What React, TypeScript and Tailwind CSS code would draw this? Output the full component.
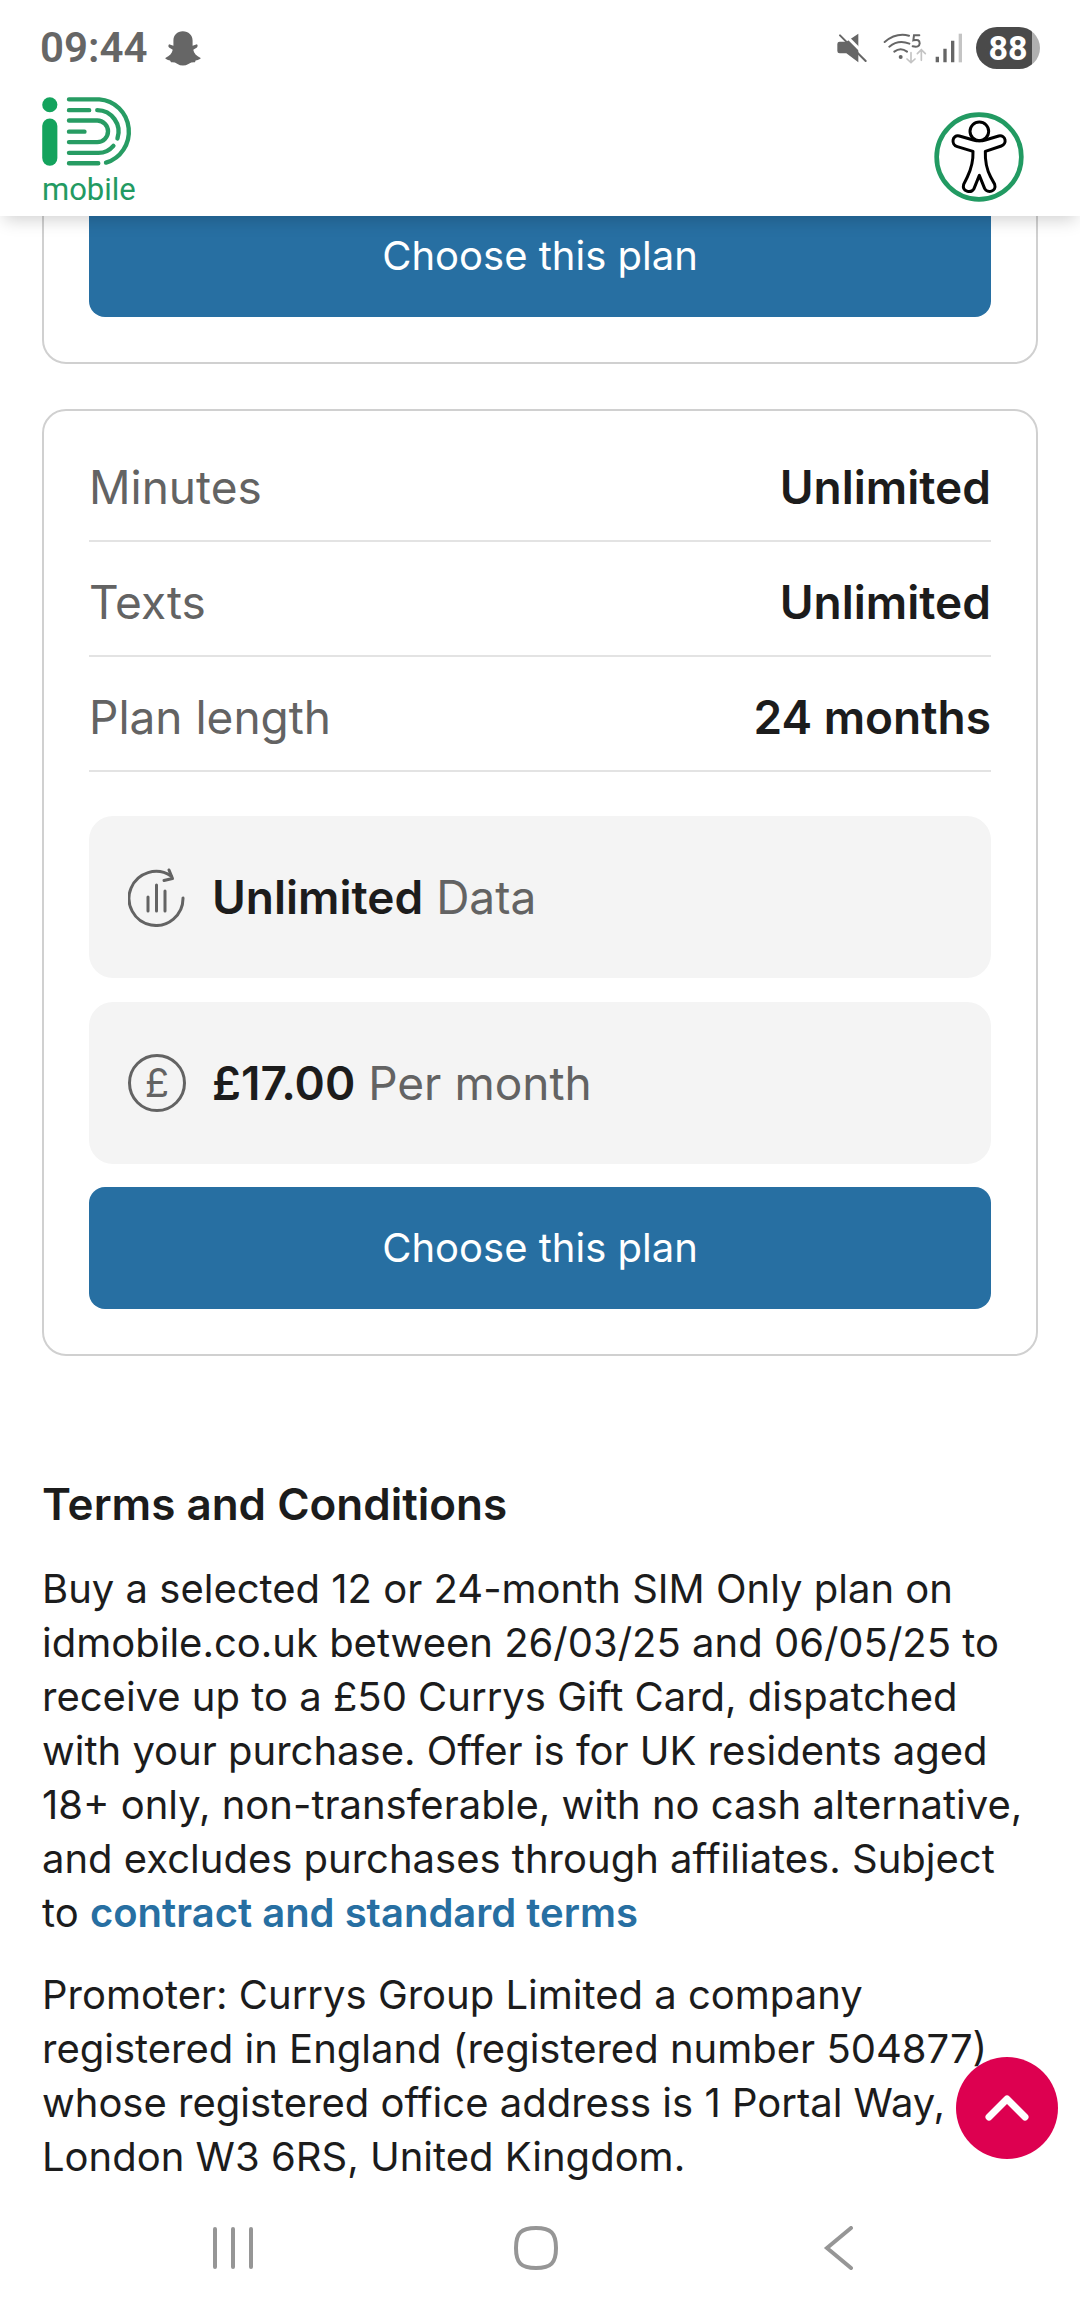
import React from 'react';

function SnapIcon() {
  return (
    <svg viewBox="497 95 107 104" className="h-[35px] w-9" fill="#666" aria-hidden="true">
      <path d="M550 96C533 96 522 108 522 123V139L509 134Q505 140 509 144L520 151C518 161 511 170 498 175Q497 179 512 183L515 188Q526 187 533 192Q550 203 568 192Q576 187 586 188L588 183Q604 179 603 175C590 170 583 161 581 151L592 144Q596 139 592 134L579 139V123C579 108 567 96 550 96Z" />
    </svg>
  );
}

function MuteIcon() {
  return (
    <svg viewBox="110 102 90 90" className="size-[30px]" aria-hidden="true">
      <path d="M118 128H138L174 104V190L138 163H118Q111 163 111 156V135Q111 128 118 128Z" fill="#666" />
      <path d="M124 97L204 178" stroke="#fff" strokeWidth="9" />
      <path d="M119 109L196 186" stroke="#666" strokeWidth="6" strokeLinecap="round" />
    </svg>
  );
}

function WifiIcon() {
  return (
    <svg viewBox="246 99 132 96" className="h-8 w-11" fill="none" strokeLinecap="round" aria-hidden="true">
      <path d="M251 129Q285 100 324 110M265 143Q292 121 325 134M280 158Q299 144 318 158" stroke="#666" strokeWidth="6" />
      <circle cx="299" cy="174" r="6" fill="#666" />
      <path d="M355 109H339L337 124Q356 119 356 133Q355 147 335 142" stroke="#666" strokeWidth="6" />
      <path d="M330 161V190M318 180L330 191L342 180M361 184V153M349 164L361 152L373 164" stroke="#c4c4c4" strokeWidth="5" />
    </svg>
  );
}

function SignalIcon() {
  return (
    <svg viewBox="404 100 84 90" className="h-[30px] w-7" strokeWidth="10" aria-hidden="true">
      <path d="M411 171V188M434 147V188M457 123V188" stroke="#666" />
      <path d="M480 102V188" stroke="#c4c4c4" />
    </svg>
  );
}

function Logo() {
  return (
    <a href="#home" aria-label="iD mobile" className="flex flex-col pt-px text-[#229a62]">
      <svg viewBox="126 293 273 205" className="h-[69px] w-[92px]" aria-hidden="true">
        <circle cx="149" cy="316" r="22.5" fill="#14a35d" />
        <rect x="126.500" y="357" width="45" height="140" rx="22.500" fill="#14a35d" />
        <path
          d="M206 300H296A94 96 0 0 1 316 488M206 332H266M290 332A64 64 0 0 1 350 416M206 363H290A32 32 0 0 1 290 427H206M206 396H252M206 459H294Q320 459 338 438M206 490H293"
          fill="none"
          stroke="#279c63"
          strokeWidth="13"
          strokeLinecap="round"
        />
      </svg>
      <span className="pt-1 font-[Roboto,sans-serif] text-[31px] leading-[40px]">mobile</span>
    </a>
  );
}

function AccessibilityIcon() {
  return (
    <svg viewBox="402 336 270 270" className="size-[90px]" fill="none" aria-hidden="true">
      <circle cx="537" cy="471" r="127" stroke="#229a62" strokeWidth="14" />
      <g stroke="#000" strokeWidth="9" strokeLinejoin="round">
        <circle cx="538" cy="394" r="28" />
        <path d="M478 408L520 420Q538 425 556 420L596 408C618 404 622 432 604 438L556 454C555 480 561 510 572 531L584 553C591 575 562 581 554 566L538 526L522 566C513 581 485 575 491 553L502 531C514 506 520 482 519 454L472 440C452 434 456 403 478 408Z" />
      </g>
    </svg>
  );
}

function DataIcon() {
  return (
    <svg viewBox="0 0 58 60" className="h-[60px] w-[58px] shrink-0" fill="none" stroke="#636363" strokeWidth="3" strokeLinecap="round" strokeLinejoin="round" aria-hidden="true">
      <path d="M55 31A27 27 0 1 1 43 9" />
      <path d="M41 3L44.500 11.500L36 13.500" />
      <path d="M20 30V44M28.500 18V44M37 24V44" />
    </svg>
  );
}

function PoundIcon() {
  return (
    <span className="flex size-[58px] shrink-0 items-center justify-center rounded-full border-3 border-[#636363] text-[40px] leading-none text-[#636363]" aria-hidden="true">
      £
    </span>
  );
}

function ChooseButton() {
  return (
    <button type="button" className="h-[122px] w-full rounded-2xl bg-[#276fa2] text-[40px] leading-[54px] text-white">
      Choose this plan
    </button>
  );
}

const rows = [
  ['Minutes', 'Unlimited'],
  ['Texts', 'Unlimited'],
  ['Plan length', '24 months'],
];

function Feature({ icon, value, label }: { icon: React.ReactNode; value: string; label: string }) {
  return (
    <div className="flex h-[162px] items-center gap-[26px] rounded-3xl bg-[#f4f4f4] px-[39px] text-[46px] leading-[60px]">
      {icon}
      <p>
        <strong className="font-semibold text-[#1c1c1c]">{value}</strong> {label}
      </p>
    </div>
  );
}

export default function App() {
  return (
    <div className="flex min-h-screen flex-col bg-white font-[Inter,sans-serif] text-[#1c1c1c]">
      <header className="relative z-10 bg-white shadow-[0_8px_16px_-4px_rgba(0,0,0,0.18)]">
        <div className="flex h-24 items-center justify-between px-10 font-[Roboto,sans-serif] text-[#666]">
          <div className="flex items-center gap-[18px]">
            <span className="text-[42px] leading-[48px] font-semibold">09:44</span>
            <SnapIcon />
          </div>
          <div className="flex items-center">
            <MuteIcon />
            <span className="ml-4 flex"><WifiIcon /></span>
            <span className="ml-2 flex"><SignalIcon /></span>
            <span className="ml-[13px] flex h-[42px] w-16 items-center justify-center rounded-full bg-linear-to-r from-[#4a4a4a] from-87% to-[#b0b0b0] to-87% text-[34px] leading-none font-bold text-white">
              88
            </span>
          </div>
        </div>
        <div className="flex h-[120px] items-start justify-between pr-14 pl-[42px]">
          <Logo />
          <button type="button" aria-label="Accessibility options" className="mt-4 rounded-full">
            <AccessibilityIcon />
          </button>
        </div>
      </header>

      <main className="px-[42px]">
        <section className="-mt-17 rounded-3xl border-2 border-[#d0d0d0] p-[45px]">
          <ChooseButton />
        </section>

        <section className="mt-[45px] rounded-3xl border-2 border-[#d0d0d0] px-[45px] pt-4 pb-[45px] text-[#636363]">
          <dl>
            {rows.map(([label, value]) => (
              <div key={label} className="flex justify-between border-b-2 border-[#e3e3e3] pt-[30px] pb-[23px] text-[46px] leading-[60px]">
                <dt>{label}</dt>
                <dd className="font-semibold text-[#1c1c1c]">{value}</dd>
              </div>
            ))}
          </dl>
          <div className="mt-11 mb-[23px] flex flex-col gap-6">
            <Feature icon={<DataIcon />} value="Unlimited" label="Data" />
            <Feature icon={<PoundIcon />} value="£17.00" label="Per month" />
          </div>
          <ChooseButton />
        </section>

        <section className="mt-[118px] text-[40px] leading-[54px]">
          <h2 className="text-[44px] leading-[60px] font-semibold">Terms and Conditions</h2>
          <p className="mt-7">
            Buy a selected 12 or 24-month SIM Only plan on<br />
            idmobile.co.uk between 26/03/25 and 06/05/25 to<br />
            receive up to a £50 Currys Gift Card, dispatched<br />
            with your purchase. Offer is for UK residents aged<br />
            18+ only, non-transferable, with no cash alternative,<br />
            and excludes purchases through affiliates. Subject<br />
            to <a href="#terms" className="font-semibold text-[#276fa2]">contract and standard terms</a>
          </p>
          <p className="mt-7">
            Promoter: Currys Group Limited a company<br />
            registered in England (registered number 504877)<br />
            whose registered office address is 1 Portal Way,<br />
            London W3 6RS, United Kingdom.
          </p>
        </section>
      </main>

      <button type="button" aria-label="Back to top" className="fixed right-[22px] bottom-[157px] z-20 flex size-[102px] items-center justify-center rounded-full bg-[#dd0050]">
        <svg viewBox="0 0 44 28" className="h-7 w-11" fill="none" stroke="#fff" strokeWidth="7" strokeLinecap="round" strokeLinejoin="round" aria-hidden="true">
          <path d="M4 23L22 5L40 23" />
        </svg>
      </button>

      <nav aria-label="System navigation" className="mt-auto flex h-[132px] items-center justify-around pr-[90px] pl-[82px] pb-1 text-[#969696]">
        <button type="button" aria-label="Recent apps">
          <svg viewBox="0 0 44 44" className="size-11" stroke="currentColor" strokeWidth="4" strokeLinecap="round"><path d="M4 3V41M22 3V41M40 3V41" /></svg>
        </button>
        <button type="button" aria-label="Home">
          <svg viewBox="0 0 44 44" className="size-11" fill="none" stroke="currentColor" strokeWidth="4"><path d="M22 2C37 2 42 7 42 22S37 42 22 42S2 37 2 22S7 2 22 2Z" /></svg>
        </button>
        <button type="button" aria-label="Back">
          <svg viewBox="0 0 44 44" className="size-11" fill="none" stroke="currentColor" strokeWidth="4" strokeLinecap="round"><path d="M34 2L10 22L34 42" /></svg>
        </button>
      </nav>
    </div>
  );
}
